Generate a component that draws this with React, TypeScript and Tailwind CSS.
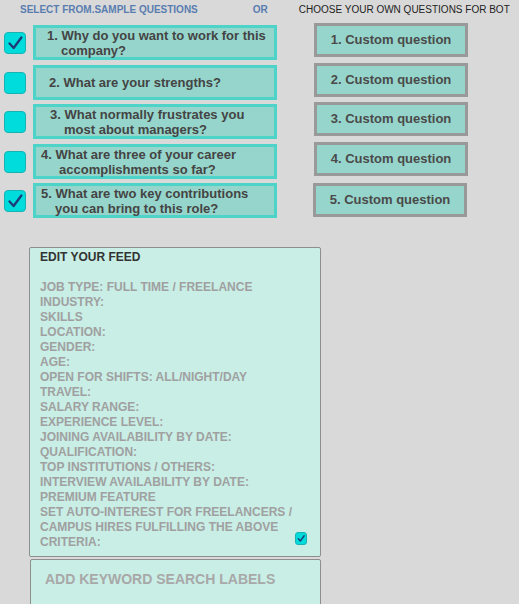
import React from "react";

const font = { fontFamily: '"Liberation Sans", Arial, sans-serif' };

function Check({ checked, small }: { checked: boolean; small?: boolean }) {
  const size = small ? "w-[12px] h-[13px] rounded-[3px]" : "w-[22px] h-[22px] rounded-[4px]";
  return (
    <div className={`${size} shrink-0 bg-[#00dcdc] border border-[#17b3b3] flex items-center justify-center`}>
      {checked && (
        <svg viewBox="0 0 22 22" className="w-full h-full">
          <path d="M5 11.5 L9.5 16.5 L18 5" fill="none" stroke="#1b3d78" strokeWidth={small ? 3 : 2.6} strokeLinecap="round" strokeLinejoin="round" />
        </svg>
      )}
    </div>
  );
}

const questions = [
  { checked: true, l1: "1. Why do you want to work for this", l2: "company?", pl: "pl-[11px]", ind: "pl-[14px]", mt: "mt-0" },
  { checked: false, l1: "2. What are your strengths?", l2: "", pl: "pl-[13px]", ind: "", mt: "mt-[5px]" },
  { checked: false, l1: "3. What normally frustrates you", l2: "most about managers?", pl: "pl-[14px]", ind: "pl-[14px]", mt: "mt-[4px]" },
  { checked: false, l1: "4. What are three of your career", l2: "accomplishments so far?", pl: "pl-[5px]", ind: "pl-[18px]", mt: "mt-[5px]" },
  { checked: true, l1: "5. What are two key contributions", l2: "you can bring to this role?", pl: "pl-[5px]", ind: "pl-[14px]", mt: "mt-[4px]" },
];

const customs = [
  { label: "1. Custom question", mt: "mt-0", ml: "ml-0" },
  { label: "2. Custom question", mt: "mt-[6px]", ml: "ml-0" },
  { label: "3. Custom question", mt: "mt-[5px]", ml: "ml-0" },
  { label: "4. Custom question", mt: "mt-[6px]", ml: "ml-0" },
  { label: "5. Custom question", mt: "mt-[7px]", ml: "-ml-[1px]" },
];

const feedItems = [
  "JOB TYPE: FULL TIME / FREELANCE",
  "INDUSTRY:",
  "SKILLS",
  "LOCATION:",
  "GENDER:",
  "AGE:",
  "OPEN FOR SHIFTS: ALL/NIGHT/DAY",
  "TRAVEL:",
  "SALARY RANGE:",
  "EXPERIENCE LEVEL:",
  "JOINING AVAILABILITY BY DATE:",
  "QUALIFICATION:",
  "TOP INSTITUTIONS / OTHERS:",
  "INTERVIEW AVAILABILITY BY DATE:",
  "PREMIUM FEATURE",
];

export default function App() {
  return (
    <div style={font} className="w-[519px] h-[604px] overflow-hidden bg-[#d9d9d9]">
      {/* header */}
      <div className="flex items-center h-[19px] text-[10px] leading-[19px]">
        <span className="ml-[20px] font-bold text-[#5a7db0]">SELECT FROM.SAMPLE QUESTIONS</span>
        <span className="ml-[55px] font-bold text-[#5a7db0]">OR</span>
        <span className="ml-[31px] text-[#222]">CHOOSE YOUR OWN QUESTIONS FOR BOT</span>
      </div>

      <div className="flex items-start">
        {/* sample questions */}
        <div className="flex flex-col pt-[6px] w-[277px]">
          {questions.map((q, i) => (
            <div key={i} className={`flex items-center ${q.mt}`}>
              <div className="w-[33px] flex justify-center pr-[4px] pl-[1px]">
                <Check checked={q.checked} />
              </div>
              <div className={`w-[244px] h-[35px] border-[3px] border-[#4dd3c8] bg-[#96d5cb] flex flex-col justify-center ${q.pl} text-[13px] leading-[15px] font-bold text-[#444]`}>
                <span className="whitespace-nowrap">{q.l1}</span>
                {q.l2 && <span className={`whitespace-nowrap ${q.ind}`}>{q.l2}</span>}
              </div>
            </div>
          ))}
        </div>

        {/* custom questions */}
        <div className="flex flex-col pt-[4px] ml-[37px]">
          {customs.map((c, i) => (
            <div key={i} className={`w-[154px] h-[34px] border-[3px] border-[#999] bg-[#96d5cb] flex items-center justify-center text-[13px] font-bold text-[#4a4a4a] ${c.mt} ${c.ml}`}>
              {c.label}
            </div>
          ))}
        </div>
      </div>

      {/* edit feed */}
      <div className="ml-[29px] mt-[29px] w-[292px] h-[310px] border border-[#8e8e8e] rounded-[2px] bg-[#c8eee6] pl-[10px] pr-[14px] pt-[2px] text-[12px] leading-[15px] font-bold">
        <div className="text-[#333]">EDIT YOUR FEED</div>
        <div className="h-[15px]" />
        {feedItems.map((t) => (
          <div key={t} className="text-[#a0a0a0]">{t}</div>
        ))}
        <div className="flex items-end justify-between text-[#a0a0a0]">
          <div className="whitespace-nowrap">
            SET AUTO-INTEREST FOR FREELANCERS /<br />
            CAMPUS HIRES FULFILLING THE ABOVE<br />
            CRITERIA:
          </div>
          <div className="mb-[5px] -mr-[1px]">
            <Check checked small />
          </div>
        </div>
      </div>

      {/* keyword labels */}
      <div className="ml-[30px] mt-[2px] w-[291px] h-[50px] border border-[#8e8e8e] rounded-[2px] bg-[#c8eee6] pl-[14px] pt-[10px] text-[14px] leading-[19px] font-bold text-[#a8a8a8]">
        ADD KEYWORD SEARCH LABELS
      </div>
    </div>
  );
}
